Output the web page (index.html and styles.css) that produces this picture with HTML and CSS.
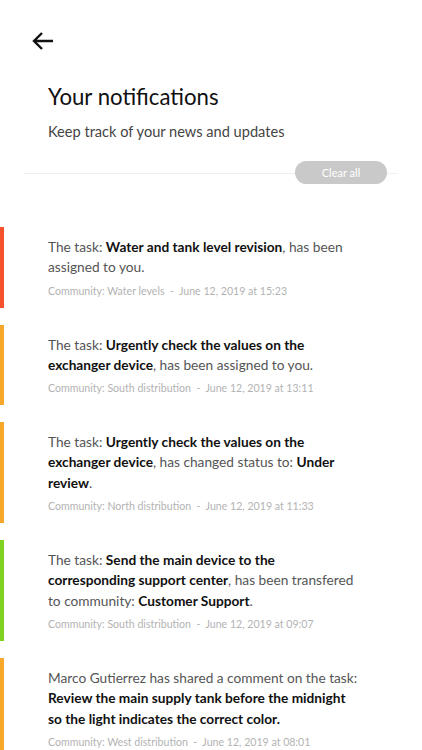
FILE: index.html
```html
<html>

<head>
    <link rel="stylesheet" href="styles.css">
</head>

<body>
    <div class="top">
        <button class="back" type="button">
            <svg width="22" height="18" viewBox="0 0 22 18"><path d="M21 9H2M10 1L2 9l8 8" fill="none" stroke="#111" stroke-width="2.4"/></svg>
        </button>
    </div>

    <div class="head">
        <h1>Your notifications</h1>
        <p>Keep track of your news and updates</p>
    </div>

    <div class="bar">
        <button class="btn-clear" type="button">Clear all</button>
    </div>

    <ul class="list">
        <li class="notif red">
            <p>The task: <b>Water and tank level revision</b>, has been assigned to you.</p>
            <span class="meta">Community: Water levels&nbsp; - &nbsp;June 12, 2019 at 15:23</span>
        </li>
        <li class="notif orange">
            <p>The task: <b>Urgently check the values on the exchanger device</b>, has been assigned to you.</p>
            <span class="meta">Community: South distribution&nbsp; - &nbsp;June 12, 2019 at 13:11</span>
        </li>
        <li class="notif orange">
            <p>The task: <b>Urgently check the values on the exchanger device</b>, has changed status to: <b>Under review</b>.</p>
            <span class="meta">Community: North distribution&nbsp; - &nbsp;June 12, 2019 at 11:33</span>
        </li>
        <li class="notif green">
            <p>The task: <b>Send the main device to the corresponding support center</b>, has been transfered to community: <b>Customer Support</b>.</p>
            <span class="meta">Community: South distribution&nbsp; - &nbsp;June 12, 2019 at 09:07</span>
        </li>
        <li class="notif orange">
            <p>Marco Gutierrez has shared a comment on the task: <b>Review the main supply tank before the midnight so the light indicates the correct color.</b></p>
            <span class="meta">Community: West distribution&nbsp; - &nbsp;June 12, 2019 at 08:01</span>
        </li>
    </ul>
</body>

</html>
```

FILE: styles.css
```css
body {
    margin: 0;
    background: #fff;
    font-family: Lato, "Open Sans", sans-serif;
    color: #555;
}

.top {
    padding: 32px 0 0 32px;
    height: 26px;
}

.back {
    border: none;
    background: none;
    padding: 0;
    cursor: pointer;
}

.head {
    padding: 24px 0 0 48px;
}

.head h1 {
    margin: 0;
    font-size: 22.2px;
    font-weight: 400;
    color: #111;
    line-height: 30px;
}

.head p {
    margin: 10px 0 0;
    font-size: 14.6px;
    color: #444;
    line-height: 20px;
}

.bar {
    margin: 19px 24px 0;
    height: 12px;
    border-bottom: 1px solid #efefef;
    display: flex;
    justify-content: flex-end;
}

.btn-clear {
    flex: none;
    height: 23px;
    width: 92px;
    margin-right: 11px;
    border: none;
    border-radius: 12px;
    background: #c9c9c9;
    color: #fff;
    font-family: Lato, sans-serif;
    font-size: 11px;
    cursor: pointer;
}

.list {
    list-style: none;
    margin: 53px 0 0;
    padding: 0;
    display: flex;
    flex-direction: column;
    gap: 17px;
}

.notif {
    border-left: 4px solid #ccc;
    padding: 10px 60px 9px 44px;
}

.notif.red {
    border-color: #f4512c;
}

.notif.orange {
    border-color: #f7a82a;
}

.notif.green {
    border-color: #7ed321;
}

.notif p {
    margin: 0;
    font-size: 13.7px;
    line-height: 20.3px;
}

.notif b {
    color: #111;
}

.meta {
    display: block;
    margin-top: 5px;
    font-size: 10.6px;
    line-height: 16px;
    color: #b3b3b3;
}
```
